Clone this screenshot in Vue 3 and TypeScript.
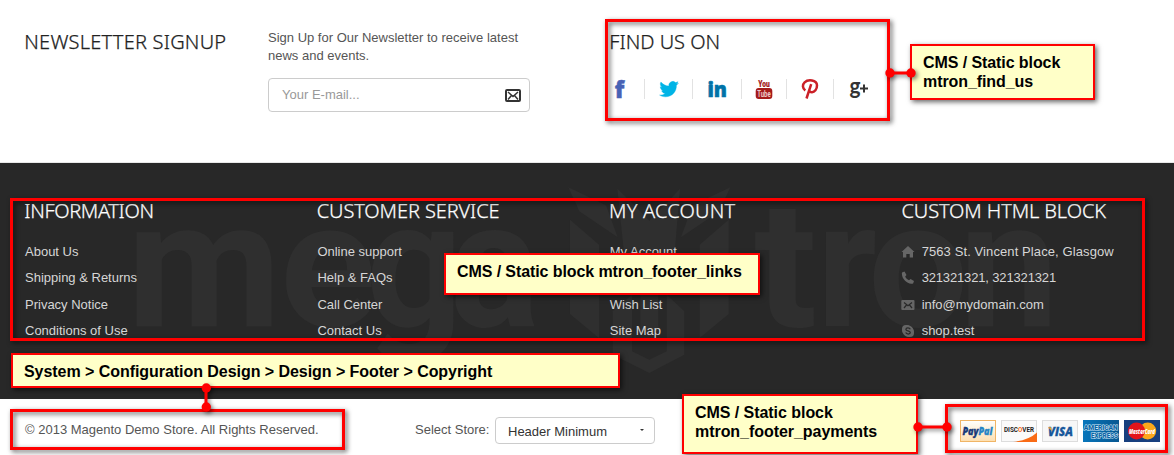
<script setup lang="ts">
interface LinkColumn { title: string; tone: string; links: string[] }
const columns: LinkColumn[] = [
  { title: 'INFORMATION', tone: 'tight', links: ['About Us', 'Shipping & Returns', 'Privacy Notice', 'Conditions of Use'] },
  { title: 'CUSTOMER SERVICE', tone: 'snug', links: ['Online support', 'Help & FAQs', 'Call Center', 'Contact Us'] },
  { title: 'MY ACCOUNT', tone: 'loose', links: ['My Account', '', 'Wish List', 'Site Map'] },
]
const letters: { c: string; x: number; s: number }[] = [
  { c: 'm', x: 127, s: 1 }, { c: 'e', x: 280, s: 1 }, { c: 'g', x: 366, s: 0.95 }, { c: 'a', x: 450, s: 0.94 },
  { c: 't', x: 754, s: 1.05 }, { c: 'r', x: 817, s: 0.92 }, { c: 'o', x: 868, s: 1 }, { c: 'n', x: 959, s: 1 },
]
</script>

<template>
  <div class="page">
    <section class="top">
      <h2 class="news-title">NEWSLETTER SIGNUP</h2>
      <div class="news">
        <p>Sign Up for Our Newsletter to receive latest news and events.</p>
        <div class="email">
          <span>Your E-mail...</span>
          <svg width="16" height="13" viewBox="0 0 16 13">
            <rect x="1" y="1" width="14" height="11" rx="1" fill="#fff" stroke="#333" stroke-width="2" />
            <path d="M3 3l5 4.5L13 3M3 10.5l3.5-4M13 10.5l-3.5-4" fill="none" stroke="#333" stroke-width="1.5" />
          </svg>
        </div>
      </div>
      <div class="find">
        <h2>FIND US ON</h2>
        <div class="social">
          <svg class="s1" viewBox="0 0 20 22"><text x="4.8" y="19.500" font-family="Open Sans" font-weight="800" font-size="23" fill="#4862b5" stroke="#4862b5" stroke-width=".5">f</text></svg>
          <i />
          <svg class="s2" viewBox="0 0 20 22"><path d="M19.4 5.2c-.7.3-1.4.5-2.2.6.8-.5 1.4-1.2 1.7-2.1-.8.5-1.6.8-2.4.9A3.9 3.9 0 0 0 9.900 8.100C6.700 8 3.900 6.500 1.900 4.100c-1.100 1.900-.5 4 1.200 5.200-.7 0-1.300-.2-1.800-.5 0 1.900 1.300 3.500 3.100 3.900-.6.1-1.100.2-1.700.1.500 1.500 1.900 2.600 3.600 2.700A8 8 0 0 1 .600 17.100c1.800 1.100 3.800 1.700 5.900 1.700 7.100 0 11.200-5.900 10.900-11.600.8-.5 1.500-1.200 2-2z" fill="#00b4e6" stroke="#00b4e6" stroke-width=".4" /></svg>
          <i />
          <svg class="s3" viewBox="0 0 20 22"><text x="0.5" y="19" font-family="Open Sans" font-weight="800" font-size="21.500" textLength="19.500" lengthAdjust="spacingAndGlyphs" fill="#0073a8" stroke="#0073a8" stroke-width=".6">in</text></svg>
          <i />
          <svg class="s4" viewBox="0 0 20 22">
            <text x="10" y="9.300" text-anchor="middle" font-family="Roboto" font-weight="900" font-size="9.800" textLength="11.500" lengthAdjust="spacingAndGlyphs" fill="#a51b1b" stroke="#a51b1b" stroke-width=".2">You</text>
            <rect x="1.700" y="10" width="16.600" height="11" rx="3" fill="#a51b1b" />
            <text x="10" y="19" text-anchor="middle" font-family="Roboto" font-weight="700" font-size="9.800" textLength="13.500" lengthAdjust="spacingAndGlyphs" fill="#eecaca">Tube</text>
          </svg>
          <i />
          <svg class="s5" viewBox="0 0 20 22"><path d="M5.300 12.400C2.300 10.300 2.200 6.600 4.600 4.300 8 1.100 16.800 1.600 17 7.300c.1 4-2.500 7.100-5.100 7-1.600 0-2.400-1.100-2.300-2M11.200 6.200L6.500 20.500" fill="none" stroke="#cb2027" stroke-width="2.500" stroke-linejoin="round" /></svg>
          <i />
          <svg class="s6" viewBox="0 0 20 22">
            <text x="0.600" y="16.300" font-family="Lato" font-weight="700" font-size="22" textLength="11" lengthAdjust="spacingAndGlyphs" fill="#333">g</text>
            <path d="M11 10.500h8M15 6.500v8" stroke="#333" stroke-width="2" />
          </svg>
        </div>
      </div>
    </section>

    <footer class="links">
      <svg class="mark" width="1174" height="236" viewBox="0 163 1174 236" aria-hidden="true">
        <g fill="#2f2f2f">
          <text v-for="l in letters" :key="l.c" :transform="`translate(${l.x},326) scale(${l.s},1)`" font-family="Roboto" font-weight="700" font-size="178">{{ l.c }}</text>
          <g transform="translate(550,178) scale(.33333)">
            <path d="M55 28L168 82 203 178 88 100ZM541 28L428 82 393 178 508 100Z" />
            <path d="M202 32L246 75 298 128 350 75 390 32 374 225 325 350V460L298 475 271 460V350L222 225Z" />
            <path d="M60 125L147 200V480L60 408ZM536 125L449 200V480L536 408Z" />
            <path d="M188 400L246 350V520L298 545 350 520V350L403 400V530L298 585 188 530Z" />
          </g>
        </g>
      </svg>
      <div v-for="col in columns" :key="col.title" class="col">
        <h2 :class="col.tone">{{ col.title }}</h2>
        <ul><li v-for="(l, i) in col.links" :key="i">{{ l }}</li></ul>
      </div>
      <div class="col contact">
        <h2 class="snug">CUSTOM HTML BLOCK</h2>
        <ul>
          <li><svg viewBox="0 0 14 14"><path d="M7 1l6.500 6H12v5.500H8.700V9H5.300v3.500H2V7H.5z" fill="#666" /></svg><span class="address">7563 St. Vincent Place, Glasgow</span></li>
          <li><svg viewBox="0 0 14 14"><path d="M1 1.500l2.500-1L5.500 4 4.200 5.500c.7 1.600 2 2.900 3.800 3.800L9.600 8.100l3.400 2-.9 2.300C6.800 14.200-.1 7.500 1 1.500z" fill="#666" /></svg><span class="phone">321321321, 321321321</span></li>
          <li><svg viewBox="0 0 14 14"><rect x=".3" y="2" width="13.200" height="10" rx="1" fill="#666" /><path d="M3 4.500L7 7.800l4-3.300M3 10l2.500-3M11 10L8.500 7" fill="none" stroke="#292929" stroke-width="1.200" /></svg>info@mydomain.com</li>
          <li><svg viewBox="0 0 14 14"><rect x="1" y="1" width="9" height="9" rx="4" fill="#666" /><rect x="4" y="4" width="9" height="9" rx="4" fill="#666" /><circle cx="7" cy="7" r="5.500" fill="#666" /><path d="M9.300 5.200C8.500 3.500 4.900 3.500 4.900 5.400c0 1.900 4.400 1.100 4.400 3.200 0 1.900-3.800 1.900-4.600 0" fill="none" stroke="#292929" stroke-width="1.300" /></svg>shop.test</li>
        </ul>
      </div>
    </footer>

    <section class="bottom">
      <span class="copy">© 2013 Magento Demo Store. All Rights Reserved.</span>
      <span class="label">Select Store:</span>
      <div class="select"><span>Header Minimum</span><b /></div>
      <div class="cards">
        <svg viewBox="0 0 36 22"><defs><linearGradient id="pp" x1="0" y1="0" x2="0" y2="1"><stop offset="0" stop-color="#fff" /><stop offset="1" stop-color="#fddfb0" /></linearGradient></defs><rect x=".5" y=".5" width="35" height="21" fill="url(#pp)" stroke="#f0b566" /><text x="2.500" y="15" font-family="Open Sans" font-weight="800" font-style="italic" font-size="10" textLength="30" lengthAdjust="spacingAndGlyphs" stroke-width=".3"><tspan fill="#183a7a" stroke="#183a7a">Pay</tspan><tspan fill="#2484c6" stroke="#2484c6">Pal</tspan></text></svg>
        <svg viewBox="0 0 36 22"><rect x=".5" y=".5" width="35" height="21" fill="#fafafa" stroke="#ddd" /><path d="M12 22Q28 20 36 12.500V22z" fill="#f96b16" /><text x="3" y="12.300" font-family="Roboto" font-weight="700" font-size="7" textLength="30" lengthAdjust="spacingAndGlyphs" fill="#222">DISC<tspan fill="#f96b16">O</tspan>VER</text></svg>
        <svg viewBox="0 0 36 22"><rect x=".5" y=".5" width="35" height="21" fill="#f7f7f7" stroke="#ddd" /><text x="6" y="16" font-family="Open Sans" font-weight="800" font-style="italic" font-size="12" textLength="25" lengthAdjust="spacingAndGlyphs" fill="#17579b" stroke="#17579b" stroke-width=".3">VISA</text><path d="M6 7.200h3l1 4z" fill="#eca52c" /></svg>
        <svg viewBox="0 0 36 22"><defs><linearGradient id="ax"><stop offset="0" stop-color="#0876bb" /><stop offset="1" stop-color="#075791" /></linearGradient></defs><rect width="36" height="22" fill="url(#ax)" /><g font-family="Roboto" font-weight="900" font-size="7.500" fill="#0a65a5" stroke="#d4e9f6" stroke-width="1.100" paint-order="stroke"><text x=".8" y="10" textLength="34" lengthAdjust="spacingAndGlyphs">AMERICAN</text><text x="8" y="18" textLength="27" lengthAdjust="spacingAndGlyphs">EXPRESS</text></g></svg>
        <svg viewBox="0 0 36 22"><rect width="36" height="22" fill="#173f7e" /><circle cx="23.700" cy="11" r="8.500" fill="#fba71b" /><circle cx="12.500" cy="11" r="8.500" fill="#e4151b" /><text x="5" y="13.800" font-family="Open Sans" font-weight="800" font-style="italic" font-size="7" textLength="26" lengthAdjust="spacingAndGlyphs" fill="#fff">MasterCard</text></svg>
      </div>
    </section>

    <!-- annotations laid over the page -->
    <div class="frame f-find" />
    <div class="frame f-links" />
    <div class="frame f-copy" />
    <div class="frame f-pay" />
    <div class="note n-find">CMS / Static block<br />mtron_find_us</div>
    <div class="note n-links">CMS / Static block mtron_footer_links</div>
    <div class="note n-copy">System &gt; Configuration Design &gt; Design &gt; Footer &gt; Copyright</div>
    <div class="note n-pay">CMS / Static block<br />mtron_footer_payments</div>
    <svg class="wires" width="1174" height="455">
      <g stroke="#f00" stroke-width="3" fill="none"><path d="M890 73H911M206 388V407M918 427H947" /></g>
      <g fill="#f00"><circle cx="890" cy="73" r="4.700" /><circle cx="911" cy="73" r="4.700" /><circle cx="206.300" cy="388" r="4.700" /><circle cx="206.300" cy="407" r="4.700" /><circle cx="918" cy="427" r="4.700" /><circle cx="947" cy="427" r="4.700" /></g>
    </svg>
  </div>
</template>

<style>
body { margin: 0; background: #fff; overflow: hidden; }
</style>
<style scoped>
* { box-sizing: border-box; }
.page { position: relative; width: 1174px; height: 455px; overflow: hidden; font: 13px/18px "Liberation Sans", Arial, sans-serif; color: #555; background: #fff; }
h2 { margin: 0 0 0 -.7px; font: 300 20px/24px "Noto Sans", sans-serif; color: #222; -webkit-text-stroke: .25px currentColor; white-space: nowrap; }
p, ul { margin: 0; padding: 0; list-style: none; }
.tight { letter-spacing: -.35px; }
.snug { letter-spacing: -.1px; }
.loose { letter-spacing: .2px; }
.top { display: flex; height: 163px; padding: 30px 0 0 25px; border-bottom: 1px solid #e8e8e8; }
.news-title { width: 243.7px; letter-spacing: .22px; }
.news { width: 342px; margin-top: -1px; }
.news p { width: 262px; }
.email { display: flex; align-items: center; justify-content: space-between; width: 262px; height: 34px; margin-top: 13px; padding: 0 8px 1px 13px; border: 1px solid #ccc; border-radius: 4px; color: #999; }
.email svg { position: relative; top: 1px; }
.social { display: flex; align-items: flex-start; margin-top: 24px; }
.social svg { width: 20px; height: 22px; overflow: visible; }
.social i { width: 1px; height: 20px; margin-top: 1px; background: #e2e2e2; }
.s1 { margin: 0 14px 0 0; }
.s2 { margin: 0 13px 0 14px; }
.s3 { margin: 0 14px; }
.s4 { margin: 0 12px; }
.s5 { margin: 0 13px; }
.s6 { margin-left: 15px; }
.links { position: relative; display: flex; height: 236px; padding: 36px 0 0 25px; background: #282828; color: #d6d6d6; }
.mark { position: absolute; left: 0; top: 0; }
.col { position: relative; width: 292.5px; }
.col h2 { color: #fff; }
.col ul { margin-top: 16px; }
.col li { display: flex; align-items: center; height: 26.3px; line-height: 26px; white-space: nowrap; }
.contact { width: 272px; }
.contact li svg { width: 14px; height: 14px; margin: 0 6.500px 0 -1px; }
.address { letter-spacing: .1px; }
.phone { letter-spacing: -.15px; }
.bottom { display: flex; align-items: flex-start; height: 56px; padding: 18px 0 0 25px; }
.copy { width: 390px; padding-top: 4px; }
.label { width: 80px; padding-top: 4px; }
.select { display: flex; justify-content: space-between; width: 160px; height: 27px; padding: 5px 10px 0 12px; border: 1px solid #ccc; border-radius: 4px; color: #333; }
.select b { width: 0; height: 0; margin-top: 6px; border: 2px solid transparent; border-top-color: #333; }
.cards { display: flex; gap: 5px; margin: 3px 0 0 305px; }
.cards svg { width: 36px; height: 22px; }
.frame { position: absolute; border: 3px solid #f00; filter: drop-shadow(2px 2px 2.500px rgba(0, 0, 0, .65)); }
.f-find { left: 605px; top: 19px; width: 285px; height: 102px; }
.f-links { left: 10px; top: 198px; width: 1135px; height: 143px; }
.f-copy { left: 10px; top: 409px; width: 335px; height: 41px; }
.f-pay { left: 945px; top: 404px; width: 223px; height: 49px; }
.note { position: absolute; padding: 7px 0 0 11px; border: 2px solid #f00; background: #ffffc8; box-shadow: 2px 2px 5px rgba(0, 0, 0, .6); color: #000; font-size: 16px; line-height: 19px; font-weight: 700; white-space: nowrap; }
.n-find { left: 910px; top: 44px; width: 185px; height: 56px; letter-spacing: -.08px; }
.n-links { left: 444px; top: 253px; width: 316px; height: 42px; letter-spacing: -.09px; }
.n-copy { left: 11px; top: 353px; width: 609px; height: 35px; letter-spacing: -.05px; }
.n-pay { left: 682px; top: 394px; width: 236px; height: 60px; letter-spacing: -.05px; }
.wires { position: absolute; left: 0; top: 0; filter: drop-shadow(2px 2px 2px rgba(0, 0, 0, .5)); }
</style>
